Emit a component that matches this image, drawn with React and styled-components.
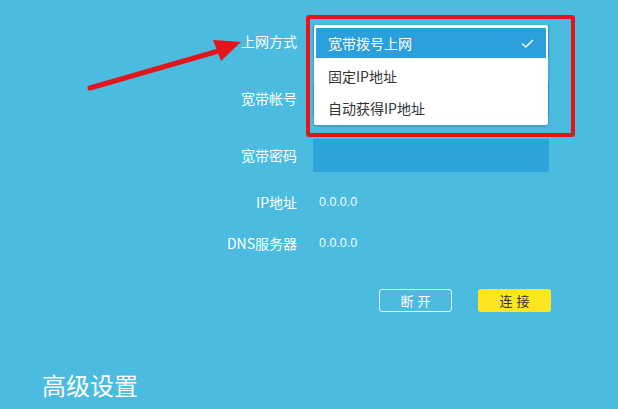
import React from 'react';
import styled, { createGlobalStyle } from 'styled-components';

const GlobalStyle = createGlobalStyle`
    html, body {
        margin: 0;
        padding: 0;
        background: #4bbbe0;
    }
    * {
        box-sizing: border-box;
    }
`;

const StyledPage = styled.div`
    position: relative;
    width: 618px;
    height: 409px;
    overflow: hidden;
    background: #4bbbe0;
    font-family: "Noto Sans CJK SC", "Noto Sans", sans-serif;
    color: #fff;
`;

const StyledForm = styled.div`
    display: grid;
    grid-template-columns: 297px 236px;
    column-gap: 16px;
    padding-top: 24px;
`;

const StyledLabel = styled.div`
    display: flex;
    align-items: center;
    justify-content: flex-end;
    height: ${(p) => p.$h || 34}px;
    margin-top: ${(p) => p.$mt || 0}px;
    font-size: 14px;
    color: #fff;
    white-space: nowrap;
`;

const StyledCell = styled.div`
    position: relative;
    display: flex;
    align-items: center;
    height: ${(p) => p.$h || 34}px;
    margin-top: ${(p) => p.$mt || 0}px;
`;

const StyledInput = styled.div`
    width: 236px;
    height: 33px;
    border-radius: 2px;
    background: #2ea3da;
`;

const StyledValue = styled.span`
    padding-left: 6px;
    font-family: "Liberation Sans", "Noto Sans", sans-serif;
    font-size: 12.5px;
    color: #f2fbff;
`;

const StyledMenu = styled.ul`
    position: absolute;
    left: 1px;
    top: 1px;
    width: 234px;
    margin: 0;
    padding: 3px 2px;
    list-style: none;
    background: #fff;
    border-radius: 2px;
    box-shadow: 0 1px 3px rgba(0, 0, 0, 0.25);
    z-index: 2;
`;

const StyledOption = styled.li`
    display: flex;
    align-items: center;
    justify-content: space-between;
    height: ${(p) => (p.$selected ? 30 : 32)}px;
    padding: ${(p) => (p.$selected ? '0 12px' : '3px 12px 0')};
    font-size: 14px;
    background: ${(p) => (p.$selected ? '#2b9fdb' : '#fff')};
    color: ${(p) => (p.$selected ? '#fff' : '#333')};
`;

const StyledMark = styled.div`
    position: absolute;
    left: -7px;
    top: -9px;
    width: 269px;
    height: 122px;
    border: 4px solid #e3141c;
    border-radius: 3px;
    z-index: 3;
    pointer-events: none;
`;

const StyledButtons = styled.div`
    display: flex;
    justify-content: flex-end;
    gap: 26px;
    width: 238px;
    height: 24px;
    margin-top: 36px;
`;

const StyledButton = styled.button`
    width: 73px;
    height: 23px;
    padding: 0;
    border-radius: 3px;
    font-family: "Noto Sans CJK SC", sans-serif;
    font-size: 13px;
    letter-spacing: 4px;
    text-indent: 4px;
    border: ${(p) => (p.$primary ? 'none' : '1.5px solid #e8f7fd')};
    background: ${(p) => (p.$primary ? '#fce61f' : 'transparent')};
    color: ${(p) => (p.$primary ? '#333' : '#fff')};
`;

const StyledHeading = styled.h2`
    margin: 56px 0 0 42px;
    font-size: 24px;
    font-weight: 400;
    line-height: 32px;
    color: #fff;
`;

const StyledArrow = styled.svg`
    position: absolute;
    left: 0;
    top: 0;
    z-index: 4;
`;

function Check() {
    return (
        <svg width="13" height="9" viewBox="0 0 13 9" fill="none">
            <path d="M1 4.5 L4.8 8 L12 1" stroke="#fff" strokeWidth="1.4" />
        </svg>
    );
}

function App() {
    return (
        <StyledPage>
            <GlobalStyle />
            <StyledForm>
                <StyledLabel>上网方式</StyledLabel>
                <StyledCell>
                    <StyledInput />
                    <StyledMenu>
                        <StyledOption $selected>
                            宽带拨号上网
                            <Check />
                        </StyledOption>
                        <StyledOption>固定IP地址</StyledOption>
                        <StyledOption>自动获得IP地址</StyledOption>
                    </StyledMenu>
                    <StyledMark />
                </StyledCell>

                <StyledLabel $mt={23}>宽带帐号</StyledLabel>
                <StyledCell $mt={23}>
                    <StyledInput />
                </StyledCell>

                <StyledLabel $mt={23}>宽带密码</StyledLabel>
                <StyledCell $mt={23}>
                    <StyledInput />
                </StyledCell>

                <StyledLabel $mt={20} $h={20}>IP地址</StyledLabel>
                <StyledCell $mt={20} $h={20}>
                    <StyledValue>0.0.0.0</StyledValue>
                </StyledCell>

                <StyledLabel $mt={21} $h={20}>DNS服务器</StyledLabel>
                <StyledCell $mt={21} $h={20}>
                    <StyledValue>0.0.0.0</StyledValue>
                </StyledCell>

                <div />
                <StyledButtons>
                    <StyledButton>断开</StyledButton>
                    <StyledButton $primary>连接</StyledButton>
                </StyledButtons>
            </StyledForm>

            <StyledHeading>高级设置</StyledHeading>

            <StyledArrow width="618" height="409" viewBox="0 0 618 409">
                <line x1="90" y1="88" x2="222" y2="50" stroke="#e3141c" strokeWidth="5" strokeLinecap="round" />
                <polygon points="213,40 221,61 241,42" fill="#e3141c" />
            </StyledArrow>
        </StyledPage>
    );
}

export default App;
